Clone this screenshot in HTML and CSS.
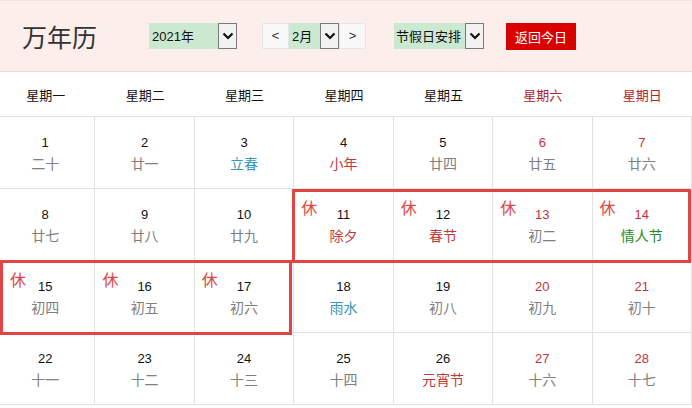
FILE: index.html
```html
<!DOCTYPE html>
<html>
<head>
    <meta charset="utf-8">
    <title>万年历</title>
    <link rel="stylesheet" href="styles.css">
</head>
<body>
    <div class="top">
        <h1 class="title">万年历</h1>

        <!-- 年份 -->
        <div class="pick year">
            <select><option>2021年</option></select>
            <span class="arrow"><svg width="12" height="8" viewBox="0 0 12 8"><path d="M1.5 1.5 L6 6 L10.5 1.5" fill="none" stroke="#111" stroke-width="2.2"/></svg></span>
        </div>

        <!-- 月份 -->
        <div class="month-box">
            <span class="step">&lt;</span>
            <div class="pick month">
                <select><option>2月</option></select>
                <span class="arrow"><svg width="12" height="8" viewBox="0 0 12 8"><path d="M1.5 1.5 L6 6 L10.5 1.5" fill="none" stroke="#111" stroke-width="2.2"/></svg></span>
            </div>
            <span class="step">&gt;</span>
        </div>

        <!-- 节假日 -->
        <div class="pick holiday">
            <select><option>节假日安排</option></select>
            <span class="arrow"><svg width="12" height="8" viewBox="0 0 12 8"><path d="M1.5 1.5 L6 6 L10.5 1.5" fill="none" stroke="#111" stroke-width="2.2"/></svg></span>
        </div>

        <button class="today">返回今日</button>
    </div>

    <div class="weeks">
        <span>星期一</span>
        <span>星期二</span>
        <span>星期三</span>
        <span>星期四</span>
        <span>星期五</span>
        <span class="weekend">星期六</span>
        <span class="weekend">星期日</span>
    </div>

    <div class="days">
        <div class="day"><b>1</b><i>二十</i></div>
        <div class="day"><b>2</b><i>廿一</i></div>
        <div class="day"><b>3</b><i class="term">立春</i></div>
        <div class="day"><b>4</b><i class="fest">小年</i></div>
        <div class="day"><b>5</b><i>廿四</i></div>
        <div class="day"><b class="red">6</b><i>廿五</i></div>
        <div class="day"><b class="red">7</b><i>廿六</i></div>

        <div class="day"><b>8</b><i>廿七</i></div>
        <div class="day"><b>9</b><i>廿八</i></div>
        <div class="day"><b>10</b><i>廿九</i></div>
        <div class="day"><span class="rest">休</span><b>11</b><i class="fest">除夕</i></div>
        <div class="day"><span class="rest">休</span><b>12</b><i class="fest">春节</i></div>
        <div class="day"><span class="rest">休</span><b class="red">13</b><i>初二</i></div>
        <div class="day"><span class="rest">休</span><b class="red">14</b><i class="love">情人节</i></div>

        <div class="day"><span class="rest edge">休</span><b>15</b><i>初四</i></div>
        <div class="day"><span class="rest">休</span><b>16</b><i>初五</i></div>
        <div class="day"><span class="rest">休</span><b>17</b><i>初六</i></div>
        <div class="day"><b>18</b><i class="term">雨水</i></div>
        <div class="day"><b>19</b><i>初八</i></div>
        <div class="day"><b class="red">20</b><i>初九</i></div>
        <div class="day"><b class="red">21</b><i>初十</i></div>

        <div class="day"><b>22</b><i>十一</i></div>
        <div class="day"><b>23</b><i>十二</i></div>
        <div class="day"><b>24</b><i>十三</i></div>
        <div class="day"><b>25</b><i>十四</i></div>
        <div class="day"><b>26</b><i class="fest">元宵节</i></div>
        <div class="day"><b class="red">27</b><i>十六</i></div>
        <div class="day"><b class="red">28</b><i>十七</i></div>

        <!-- 春节假期框 -->
        <div class="span-off first"></div>
        <div class="span-off second"></div>
    </div>
</body>
</html>
```

FILE: styles.css
```css
body {
    margin: 0;
    width: 692px;
    height: 408px;
    overflow: hidden;
    background: #fff;
    font-family: "Liberation Sans", "Noto Sans CJK SC", sans-serif;
    color: #111;
}
.top {
    display: flex;
    align-items: center;
    height: 70px;
    padding-left: 22px;
    background: #fbeeeb;
    border-top: 1px solid #f3e2de;
    border-bottom: 1px solid #ecdcd8;
}
.title {
    margin: 0 52px 0 0;
    font-family: "Noto Sans CJK SC", serif;
    font-weight: normal;
    font-size: 25px;
    color: #333;
    line-height: 30px;
}
.pick {
    display: flex;
    height: 26px;
}
.pick select {
    -webkit-appearance: none;
    appearance: none;
    border: none;
    outline: none;
    margin: 0;
    padding: 0 0 0 3px;
    height: 26px;
    background: #cbe8d0;
    font-family: "Liberation Sans", "Noto Sans CJK SC", sans-serif;
    font-size: 13px;
    color: #111;
}
.pick .arrow {
    display: flex;
    align-items: center;
    justify-content: center;
    width: 17px;
    height: 24px;
    border: 1px solid #7a7a7a;
    background: #f2f2f2;
}
.year select {
    width: 69px;
}
.year {
    margin-right: 25px;
}
.month-box {
    display: flex;
    margin-right: 28px;
}
.step {
    width: 25px;
    height: 24px;
    line-height: 24px;
    text-align: center;
    font-size: 13px;
    color: #333;
    background: #f8f8f8;
    border: 1px solid #e6e6e6;
}
.month select {
    width: 31px;
}
.holiday select {
    width: 71px;
    padding-left: 2px;
}
.holiday {
    margin-right: 22px;
}
.today {
    width: 70px;
    height: 27px;
    padding: 0;
    border: none;
    background: #d90000;
    color: #fff;
    font-family: "Noto Sans CJK SC", sans-serif;
    font-size: 13px;
    cursor: pointer;
}

.weeks {
    display: grid;
    grid-template-columns: repeat(7, 1fr);
    width: 696px;
    margin-left: -4px;
    height: 44px;
    align-items: center;
    text-align: center;
    font-family: "Noto Sans CJK SC", sans-serif;
    font-size: 13px;
    color: #111;
    border-bottom: 1px solid #e3e3e3;
}
.weeks .weekend {
    color: #b3232b;
}

.days {
    position: relative;
    display: grid;
    grid-template-columns: repeat(7, 1fr);
    grid-auto-rows: 72px;
    width: 696px;
    margin-left: -4px;
}
.day {
    position: relative;
    box-sizing: border-box;
    border-right: 1px solid #e3e3e3;
    border-bottom: 1px solid #e3e3e3;
    padding-top: 17px;
    text-align: center;
}
.day b {
    display: block;
    font-weight: normal;
    font-size: 13px;
    line-height: 18px;
    color: #111;
}
.day b.red {
    color: #c62f3a;
}
.day i {
    display: block;
    font-style: normal;
    font-family: "Noto Sans CJK SC", sans-serif;
    font-size: 14px;
    line-height: 22px;
    color: #808080;
}
.day i.term {
    color: #3896b8;
}
.day i.fest {
    color: #bf3a3c;
}
.day i.love {
    color: #1e8c1e;
}
.rest {
    position: absolute;
    left: 7px;
    top: 8px;
    font-family: "Noto Sans CJK SC", sans-serif;
    font-size: 16px;
    line-height: 20px;
    color: #e04848;
}
.rest.edge {
    left: 14px;
}
.span-off {
    position: absolute;
    border: 3px solid #e24444;
    pointer-events: none;
}
.span-off.first {
    grid-row: 2 / 3;
    grid-column: 4 / 8;
    top: 0;
    left: -2px;
    right: 1px;
    bottom: -2px;
}
.span-off.second {
    grid-row: 3 / 4;
    grid-column: 1 / 4;
    top: -1px;
    left: 4px;
    right: 2px;
    bottom: -2px;
}
```
